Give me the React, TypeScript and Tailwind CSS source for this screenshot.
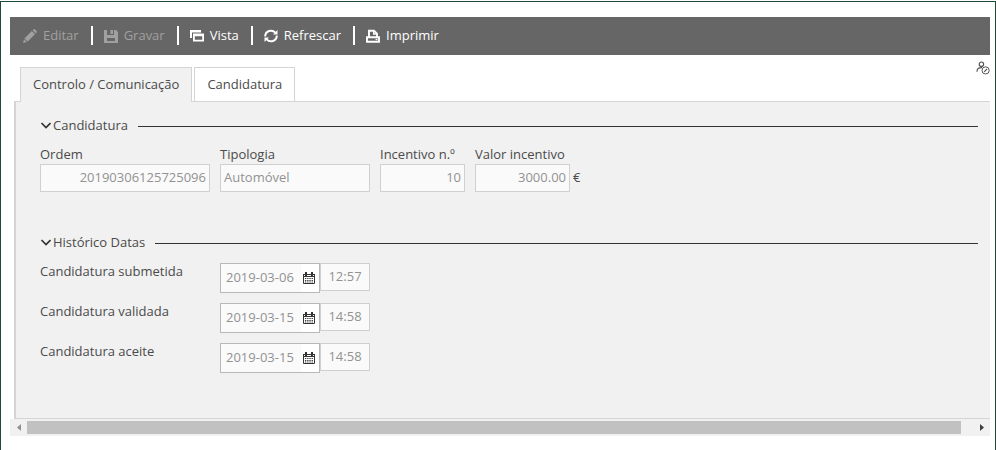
import type { ReactNode } from "react";

function PencilIcon() {
  return (
    <svg width="14" height="14" viewBox="0 0 14 14" fill="currentColor" aria-hidden="true">
      <path d="M0 14 L1 10.2 L3.8 13 Z M1.4 9.4 L8.8 2 L12 5.2 L4.6 12.6 Z M9.6 1.3 L10.6 0.3 Q11.4 -0.1 12 0.4 L13.6 2 Q14 2.6 13.6 3.2 L12.7 4.4 Z" />
    </svg>
  );
}

function SaveIcon() {
  return (
    <svg width="14" height="14" viewBox="0 0 14 14" fill="currentColor" aria-hidden="true">
      <path fillRule="evenodd" d="M0 1 H3 V6 H10 V1 H12 L14 3 V14 H0 Z M3 9 V12 H11 V9 Z" />
      <path d="M6.5 1 H9 V5 H6.5 Z" />
    </svg>
  );
}

function WindowsIcon() {
  return (
    <svg width="14" height="12" viewBox="0 0 14 12" fill="currentColor" aria-hidden="true">
      <path d="M0 0 H11 V2.6 H2 V8 H0 Z" />
      <path fillRule="evenodd" d="M3 3.5 H14 V11.5 H3 Z M4.8 6.3 V9.8 H12.2 V6.3 Z" />
    </svg>
  );
}

function RefreshIcon() {
  return (
    <svg width="14" height="14" viewBox="0 0 14 14" fill="none" stroke="currentColor" strokeWidth="2" aria-hidden="true">
      <path d="M1.2 7.5 C1.2 1.8 8 0 11.3 3.6" />
      <path d="M12.8 6.5 C12.8 12.2 6 14 2.7 10.4" />
      <path d="M13.5 1 V5.6 H9 Z" fill="currentColor" stroke="none" />
      <path d="M0.5 13 V8.4 H5 Z" fill="currentColor" stroke="none" />
    </svg>
  );
}

function PrinterIcon() {
  return (
    <svg width="14" height="14" viewBox="0 0 14 14" fill="none" stroke="currentColor" strokeWidth="1.9" aria-hidden="true">
      <path d="M3 8 V1.8 H8 L11 4.6 V8" />
      <path d="M7.6 1.5 V5 H11" strokeWidth="1.3" />
      <path d="M1 12.8 V8.3 H13 V12.8 Z" />
      <path d="M9.6 10.5 H11.4" strokeWidth="1.4" />
    </svg>
  );
}

function UserIcon() {
  return (
    <svg width="14" height="14" viewBox="0 0 14 14" fill="none" stroke="currentColor" aria-hidden="true">
      <circle cx="5.4" cy="3.2" r="2.2" strokeWidth="1.2" />
      <path d="M1 10.8 C1 7.8 2.4 6.6 6 6.6" strokeWidth="1.2" />
      <circle cx="9.6" cy="9.4" r="3.6" />
      <path d="M8.2 10.8 L11 8" strokeWidth="1.1" />
    </svg>
  );
}

function CalendarIcon() {
  return (
    <svg width="12" height="12" viewBox="0 0 12 12" fill="none" stroke="currentColor" aria-hidden="true">
      <path d="M0.5 2 V11.5 H11.5 V2" />
      <path d="M0 2.5 H12" />
      <path d="M0 4.5 H12" />
      <path d="M3 0 V4 M9 0 V4" strokeWidth="2" />
      <path d="M2 6.5 H10 M2 8.5 H10 M2 10 H10" strokeDasharray="1.3 0.9" />
    </svg>
  );
}

const actions = [
  { label: "Editar", icon: <PencilIcon />, disabled: true },
  { label: "Gravar", icon: <SaveIcon />, disabled: true },
  { label: "Vista", icon: <WindowsIcon />, disabled: false },
  { label: "Refrescar", icon: <RefreshIcon />, disabled: false },
  { label: "Imprimir", icon: <PrinterIcon />, disabled: false },
];

const dates = [
  { id: "submetida", label: "Candidatura submetida", date: "2019-03-06", time: "12:57" },
  { id: "validada", label: "Candidatura validada", date: "2019-03-15", time: "14:58" },
  { id: "aceite", label: "Candidatura aceite", date: "2019-03-15", time: "14:58" },
];

const inputStyle =
  "block h-7 border border-[#d0d0d0] bg-[#fafafa] px-[3px] pb-0.5 text-[#929292] outline-none";

function Toolbar() {
  return (
    <div className="flex h-[38px] items-center bg-[#666666] pb-px pl-[13px] text-white">
      {actions.map((action, i) => (
        <div key={action.label} className="flex items-center">
          {i > 0 && <span className="mr-[11px] ml-3 h-[19px] w-0.5 bg-white" />}
          <button
            type="button"
            disabled={action.disabled}
            className="flex items-center gap-1.5 disabled:text-[#a0a0a0]"
          >
            {action.icon}
            <span className="pb-0.5 leading-5">{action.label}</span>
          </button>
        </div>
      ))}
    </div>
  );
}

function SectionTitle({ children }: { children: ReactNode }) {
  return (
    <h2 className="flex h-5 items-center gap-[10px] pr-3">
      <button type="button" aria-expanded="true" className="flex items-center gap-0.5 pt-0.5">
        <svg width="11" height="8" viewBox="0 0 11 8" fill="none" stroke="#333" strokeWidth="1.7" aria-hidden="true">
          <path d="M1.5 1 L6 5.5 L10.5 1" />
        </svg>
        {children}
      </button>
      <span className="mt-0.5 h-px flex-1 bg-[#333333]" />
    </h2>
  );
}

function Field({ id, label, children }: { id: string; label: string; children: ReactNode }) {
  return (
    <div>
      <label htmlFor={id} className="block leading-5">
        {label}
      </label>
      {children}
    </div>
  );
}

function DateRow({ id, label, date, time }: (typeof dates)[number]) {
  return (
    <div className="flex items-start">
      <label htmlFor={id} className="w-[180px] leading-4">
        {label}
      </label>
      <div className="flex h-[30px] w-[100px] items-center border border-[#b8b8b8] bg-white">
        <input
          id={id}
          readOnly
          defaultValue={date}
          className="h-full w-20 bg-[#fafafa] pb-0.5 pl-[5px] text-[#929292] outline-none"
        />
        <button type="button" aria-label="Calendário" className="pl-0.5 text-[#333333]">
          <CalendarIcon />
        </button>
      </div>
      <input
        readOnly
        aria-label={`${label} hora`}
        defaultValue={time}
        className="h-7 w-[50px] border border-[#d0d0d0] bg-[#fafafa] pb-0.5 text-center text-[#929292] outline-none"
      />
    </div>
  );
}

function ScrollBar() {
  return (
    <div className="flex h-[17px] items-center bg-[#f1f1f1]">
      <button type="button" aria-label="Esquerda" className="flex w-[17px] justify-center">
        <svg width="4" height="7" viewBox="0 0 4 7" fill="#909090" aria-hidden="true">
          <path d="M4 0 V7 L0 3.5 Z" />
        </svg>
      </button>
      <div className="flex-1 pr-3">
        <div className="h-[13px] bg-[#c1c1c1]" />
      </div>
      <button type="button" aria-label="Direita" className="flex w-[17px] justify-center">
        <svg width="4" height="7" viewBox="0 0 4 7" fill="#404040" aria-hidden="true">
          <path d="M0 0 V7 L4 3.5 Z" />
        </svg>
      </button>
    </div>
  );
}

export default function App() {
  return (
    <div className="flex min-h-screen flex-col bg-white pt-px font-['Open_Sans',sans-serif] text-[13px] text-[#4a4a4a]">
      <main className="flex-1 border-x border-t border-[#1f4a37] pt-[15px] pr-[5px] pl-[9px]">
        <Toolbar />

        <div className="flex items-start justify-between">
          <div role="tablist" className="mt-3 ml-[10px] flex gap-0.5">
            <button
              type="button"
              role="tab"
              aria-selected="true"
              className="relative z-10 -mb-px h-[35px] border border-b-0 border-[#d4d4d4] bg-[#f1f1f1] px-3"
            >
              Controlo / Comunicação
            </button>
            <button
              type="button"
              role="tab"
              aria-selected="false"
              className="h-[34px] border border-b-0 border-[#d4d4d4] bg-white px-3"
            >
              Candidatura
            </button>
          </div>
          <button type="button" aria-label="Utilizador" className="mt-1.5 text-[#555555]">
            <UserIcon />
          </button>
        </div>

        <div className="ml-1 border-t border-b border-l-2 border-[#d4d4d4] bg-[#f1f1f1] pt-[13px] pb-[45px] pl-6">
          <section>
            <SectionTitle>Candidatura</SectionTitle>
            <div className="mt-[9px] flex gap-[10px]">
              <Field id="ordem" label="Ordem">
                <input id="ordem" readOnly defaultValue="20190306125725096" className={`${inputStyle} w-[170px] text-right`} />
              </Field>
              <Field id="tipologia" label="Tipologia">
                <input id="tipologia" readOnly defaultValue="Automóvel" className={`${inputStyle} w-[150px]`} />
              </Field>
              <Field id="incentivo" label="Incentivo n.º">
                <input id="incentivo" readOnly defaultValue="10" className={`${inputStyle} w-[85px] text-right`} />
              </Field>
              <Field id="valor" label="Valor incentivo">
                <div className="flex items-center gap-[3px]">
                  <input id="valor" readOnly defaultValue="3000.00" className={`${inputStyle} w-[95px] text-right`} />
                  <span>€</span>
                </div>
              </Field>
            </div>
          </section>

          <section className="mt-10">
            <SectionTitle>Histórico Datas</SectionTitle>
            <div className="mt-[11px] flex flex-col gap-[10px]">
              {dates.map((row) => (
                <DateRow key={row.id} {...row} />
              ))}
            </div>
          </section>
        </div>

        <ScrollBar />
      </main>
    </div>
  );
}
